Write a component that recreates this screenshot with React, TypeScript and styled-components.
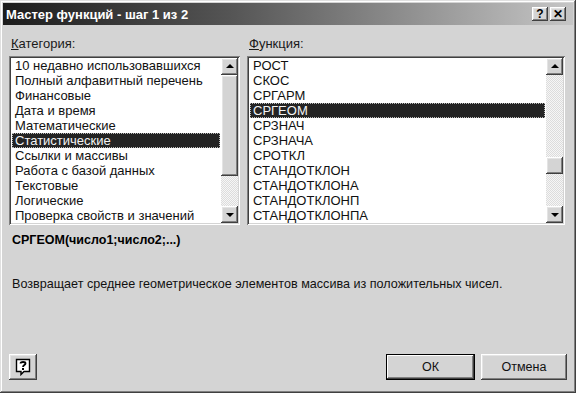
import React from "react";
import styled, { createGlobalStyle, css } from "styled-components";

const GlobalStyle = createGlobalStyle`
    html, body {
        margin: 0;
        padding: 0;
        background: #d4d4d4;
    }
    * {
        box-sizing: border-box;
    }
`;

const raised = css`
    box-shadow: inset -1px -1px #404040, inset 1px 1px #ffffff, inset -2px -2px #808080,
        inset 2px 2px #e4e4e4;
`;

const Window = styled.div`
    width: 576px;
    height: 393px;
    padding: 3px;
    background: #d4d4d4;
    display: flex;
    flex-direction: column;
    font-family: "Liberation Sans", Arial, sans-serif;
    color: #000;
    box-shadow: inset -1px -1px #404040, inset 1px 1px #e0e0e0, inset -2px -2px #808080,
        inset 2px 2px #ffffff;
`;

const TitleBar = styled.div`
    height: 22px;
    display: flex;
    align-items: center;
    padding: 0 7px 0 3px;
    background: linear-gradient(to right, #1c1c1c 0%, #555 40%, #c6c6c6 100%);
`;

const Title = styled.span`
    flex: 1;
    color: #fff;
    font-weight: bold;
    font-size: 13px;
`;

const CaptionBtn = styled.button<{ $gap?: boolean }>`
    width: 16px;
    height: 14px;
    padding: 0;
    margin-left: ${(p) => (p.$gap ? "2px" : "0")};
    border: none;
    background: #d4d4d4;
    ${raised};
    display: flex;
    align-items: center;
    justify-content: center;
    font-family: "Liberation Sans", Arial, sans-serif;
    font-weight: bold;
    font-size: 12px;
    line-height: 1;
    color: #000;
`;

const Body = styled.div`
    flex: 1;
    display: flex;
    flex-direction: column;
    padding: 11px 6px 9px 6px;
`;

const Lists = styled.div`
    display: grid;
    grid-template-columns: 231px 318px;
    column-gap: 7px;
`;

const Column = styled.div`
    display: flex;
    flex-direction: column;
`;

const Label = styled.div`
    font-size: 13px;
    height: 16px;
    line-height: 16px;
    padding-left: 2px;
    margin-bottom: 4px;
    color: #1a1a1a;
`;

const Hot = styled.span`
    text-decoration: underline;
`;

const ListBox = styled.div`
    height: 169px;
    padding: 2px;
    background: #fff;
    display: flex;
    box-shadow: inset 1px 1px #808080, inset -1px -1px #ffffff, inset 2px 2px #404040,
        inset -2px -2px #d4d4d4;
`;

const Items = styled.div`
    flex: 1;
    overflow: hidden;
    padding-right: 1px;
`;

const Item = styled.div<{ $selected?: boolean }>`
    height: 15px;
    line-height: 15px;
    font-size: 13px;
    padding-left: 3px;
    white-space: nowrap;
    margin-left: 1px;
    background: ${(p) => (p.$selected ? "#242424" : "transparent")};
    color: ${(p) => (p.$selected ? "#f4f4f4" : "#111")};
    outline: ${(p) => (p.$selected ? "1px dotted #bbb" : "none")};
    outline-offset: -1px;
`;

const ScrollBar = styled.div`
    width: 17px;
    display: flex;
    flex-direction: column;
    background-color: #e8e8e8;
    background-image: repeating-conic-gradient(#f6f6f6 0 25%, #dcdcdc 0 50%);
    background-size: 2px 2px;
`;

const ScrollBtn = styled.div`
    height: 17px;
    flex-shrink: 0;
    background: #d4d4d4;
    ${raised};
    display: flex;
    align-items: center;
    justify-content: center;
`;

const Track = styled.div`
    flex: 1;
    position: relative;
`;

const Thumb = styled.div<{ $top: number; $height: number }>`
    position: absolute;
    left: 0;
    right: 0;
    top: ${(p) => p.$top}px;
    height: ${(p) => p.$height}px;
    background: #d4d4d4;
    ${raised};
`;

const Arrow = styled.span<{ $down?: boolean }>`
    width: 0;
    height: 0;
    border-left: 4px solid transparent;
    border-right: 4px solid transparent;
    ${(p) =>
        p.$down
            ? "border-top: 4px solid #000; margin-top: 1px;"
            : "border-bottom: 4px solid #000; margin-top: -1px;"}
`;

const Syntax = styled.div`
    font-size: 12.5px;
    font-weight: bold;
    margin-top: 7px;
    padding-left: 3px;
    line-height: 16px;
`;

const Description = styled.div`
    font-size: 12.6px;
    margin-top: 28px;
    padding-left: 3px;
    line-height: 16px;
    color: #111;
`;

const Footer = styled.div`
    margin-top: auto;
    display: flex;
    align-items: center;
    gap: 6px;
    padding-bottom: 1px;
`;

const HelpBtn = styled.button`
    width: 28px;
    height: 26px;
    margin-left: 0;
    margin-right: auto;
    border: none;
    padding: 0;
    background: #d4d4d4;
    ${raised};
    display: flex;
    align-items: center;
    justify-content: center;
`;

const PushBtn = styled.button<{ $default?: boolean }>`
    width: ${(p) => (p.$default ? "89px" : "86px")};
    height: 26px;
    border: none;
    padding: 0;
    background: #d4d4d4;
    font-family: "Liberation Sans", Arial, sans-serif;
    font-size: 12.5px;
    color: #111;
    box-shadow: ${(p) =>
        p.$default
            ? "inset 0 0 0 1px #000, inset -2px -2px #404040, inset 2px 2px #ffffff, inset -3px -3px #808080"
            : "inset -1px -1px #404040, inset 1px 1px #ffffff, inset -2px -2px #808080, inset 2px 2px #e4e4e4"};
`;

const categories = [
    "10 недавно использовавшихся",
    "Полный алфавитный перечень",
    "Финансовые",
    "Дата и время",
    "Математические",
    "Статистические",
    "Ссылки и массивы",
    "Работа с базой данных",
    "Текстовые",
    "Логические",
    "Проверка свойств и значений",
];

const functions = [
    "РОСТ",
    "СКОС",
    "СРГАРМ",
    "СРГЕОМ",
    "СРЗНАЧ",
    "СРЗНАЧА",
    "СРОТКЛ",
    "СТАНДОТКЛОН",
    "СТАНДОТКЛОНА",
    "СТАНДОТКЛОНП",
    "СТАНДОТКЛОНПА",
];

interface IListProps {
    items: string[];
    selected: number;
    thumbTop: number;
    thumbHeight: number;
}

const List = ({ items, selected, thumbTop, thumbHeight }: IListProps) => {
    return (
        <ListBox>
            <Items>
                {items.map((item, index) => (
                    <Item key={item} $selected={index === selected}>
                        {item}
                    </Item>
                ))}
            </Items>
            <ScrollBar>
                <ScrollBtn>
                    <Arrow />
                </ScrollBtn>
                <Track>
                    <Thumb $top={thumbTop} $height={thumbHeight} />
                </Track>
                <ScrollBtn>
                    <Arrow $down />
                </ScrollBtn>
            </ScrollBar>
        </ListBox>
    );
};

const HelpIcon = () => (
    <svg width="16" height="18" viewBox="0 0 16 18">
        <path d="M1.5 1.5 H14.5 V13.5 H9 L6 16.5 V13.5 H1.5 Z" fill="#fff" stroke="#000" strokeWidth="1.4" />
        <path
            d="M5.5 5.5 C5.5 3.5 10.5 3.5 10.5 5.5 C10.5 7 8 7.2 8 9"
            fill="none"
            stroke="#000"
            strokeWidth="1.8"
        />
        <rect x="7" y="10" width="2" height="2" fill="#000" />
    </svg>
);

function App() {
    return (
        <>
            <GlobalStyle />
            <Window>
                <TitleBar>
                    <Title>Мастер функций - шаг 1 из 2</Title>
                    <CaptionBtn>?</CaptionBtn>
                    <CaptionBtn $gap>✕</CaptionBtn>
                </TitleBar>
                <Body>
                    <Lists>
                        <Column>
                            <Label>
                                <Hot>К</Hot>атегория:
                            </Label>
                            <List items={categories} selected={5} thumbTop={0} thumbHeight={101} />
                        </Column>
                        <Column>
                            <Label>
                                <Hot>Ф</Hot>ункция:
                            </Label>
                            <List items={functions} selected={3} thumbTop={82} thumbHeight={17} />
                        </Column>
                    </Lists>
                    <Syntax>СРГЕОМ(число1;число2;...)</Syntax>
                    <Description>
                        Возвращает среднее геометрическое элементов массива из положительных чисел.
                    </Description>
                    <Footer>
                        <HelpBtn>
                            <HelpIcon />
                        </HelpBtn>
                        <PushBtn $default>ОК</PushBtn>
                        <PushBtn>Отмена</PushBtn>
                    </Footer>
                </Body>
            </Window>
        </>
    );
}

export default App;
